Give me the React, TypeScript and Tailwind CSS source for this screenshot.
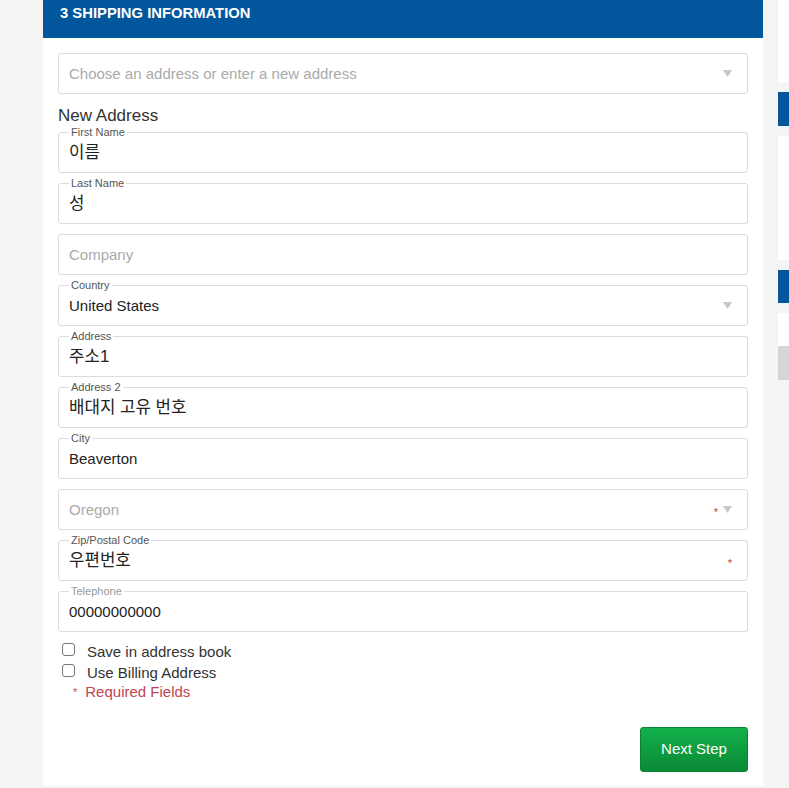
import React from "react";

const font = { fontFamily: '"Liberation Sans", "Noto Sans CJK KR", Arial, sans-serif' };

function Arrow() {
  return (
    <svg width="9" height="7" viewBox="0 0 9 7" className="shrink-0">
      <polygon points="0,0 9,0 4.5,7" fill="#c8c8c8" />
    </svg>
  );
}

type FieldProps = {
  label?: string;
  labelMuted?: boolean;
  value?: string;
  placeholder?: string;
  select?: boolean;
  required?: boolean;
  korean?: boolean;
};

function Field({ label, labelMuted, value, placeholder, select, required, korean }: FieldProps) {
  return (
    <div className="relative h-[41px] border border-[#dcdcdc] rounded-[3px] bg-white flex items-center pl-[10px] pr-[15px]">
      {label && (
        <span
          className={`absolute left-[10px] top-[-8px] bg-white px-[2px] text-[11px] leading-[14px] ${
            labelMuted ? "text-[#9a9a9a]" : "text-[#555]"
          }`}
        >
          {label}
        </span>
      )}
      <div
        className={`flex-1 ${korean ? "text-[16.8px]" : "text-[15px]"} leading-[20px] ${
          value ? "text-[#222]" : "text-[#aaa]"
        } ${label ? "pt-[1px]" : ""}`}
      >
        {value ?? placeholder}
      </div>
      {required && (
        <span className={`text-[#c43d3d] text-[11px] leading-[10px] ${select ? "mr-[5px]" : "mr-[0px]"} mt-[4px]`}>*</span>
      )}
      {select && <Arrow />}
    </div>
  );
}

function Checkbox({ label }: { label: string }) {
  return (
    <label className="flex items-center h-[21px]">
      <span className="ml-[4px] w-[13px] h-[13px] border border-[#767676] rounded-[3px] bg-white mt-[-4px]" />
      <span className="ml-[12px] text-[15px] leading-[20px] text-[#333]">{label}</span>
    </label>
  );
}

export default function App() {
  return (
    <div className="w-[789px] h-[788px] overflow-hidden bg-[#f4f4f4] flex" style={font}>
      <div className="ml-[43px] w-[720px] shrink-0 bg-white h-[786px] flex flex-col">
        <div className="h-[38px] bg-[#02579c] px-[17px] pt-[1px]">
          <span className="text-white text-[14.8px] leading-[22px] font-bold">3 SHIPPING INFORMATION</span>
        </div>
        <div className="px-[15px] pt-[15px] flex flex-col">
          <Field placeholder="Choose an address or enter a new address" select />
          <div className="pt-[12px] pb-[6px] text-[17px] leading-[20px] text-[#333]">New Address</div>
          <div className="flex flex-col gap-[10px]">
            <Field label="First Name" value="이름" korean />
            <Field label="Last Name" value="성" korean />
            <Field placeholder="Company" />
            <Field label="Country" value="United States" select />
            <Field label="Address" value="주소1" korean />
            <Field label="Address 2" value="배대지 고유 번호" korean />
            <Field label="City" value="Beaverton" />
            <Field placeholder="Oregon" select required />
            <Field label="Zip/Postal Code" value="우편번호" required korean />
            <Field label="Telephone" labelMuted value="00000000000" />
          </div>
          <div className="mt-[9px] flex flex-col">
            <Checkbox label="Save in address book" />
            <Checkbox label="Use Billing Address" />
            <div className="ml-[15px] text-[15px] leading-[20px] text-[#c0464f] mt-[-1px]">
              <span className="text-[11px] align-top mr-[8px]">*</span>Required Fields
            </div>
          </div>
          <div className="flex justify-end mt-[25px]">
            <button className="w-[108px] h-[45px] rounded-[3px] bg-gradient-to-b from-[#12b14b] to-[#0a8a35] text-white text-[15px] border border-[#0a8232]">
              Next Step
            </button>
          </div>
        </div>
      </div>
      <div className="ml-[15px] w-[260px] shrink-0 flex flex-col">
        <div className="h-[82px] bg-white" />
        <div className="mt-[10px] h-[34px] bg-[#02579c]" />
        <div className="mt-[10px] h-[124px] bg-white" />
        <div className="mt-[10px] h-[33px] bg-[#02579c]" />
        <div className="mt-[10px] h-[33px] bg-white" />
        <div className="h-[34px] bg-[#d6d6d6]" />
      </div>
    </div>
  );
}
